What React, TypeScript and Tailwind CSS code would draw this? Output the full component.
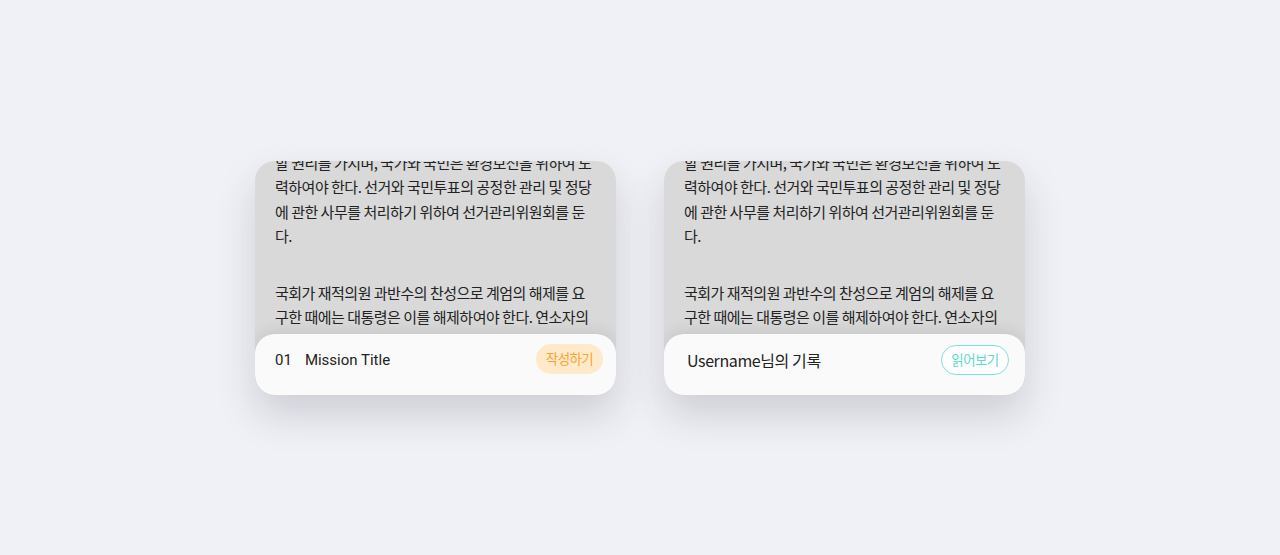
const paragraphs = [
	[
		"할 권리를 가지며, 국가와 국민은 환경보전을 위하여 노",
		"력하여야 한다. 선거와 국민투표의 공정한 관리 및 정당",
		"에 관한 사무를 처리하기 위하여 선거관리위원회를 둔",
		"다."
	],
	[
		"국회가 재적의원 과반수의 찬성으로 계엄의 해제를 요",
		"구한 때에는 대통령은 이를 해제하여야 한다. 연소자의",
		"근로는 특별한 보호를 받는다."
	]
];

const korean = { fontFamily: "'Noto Sans CJK KR', 'Noto Sans', sans-serif" };
const latin = { fontFamily: "Roboto, 'Noto Sans CJK KR', sans-serif" };

const BodyText = () => (
	<div className="flex-1 overflow-hidden px-5">
		<div
			className="-mt-[10px] text-[15px] leading-[24.5px] tracking-[-0.5px] text-[#222222]"
			style={korean}
		>
			{paragraphs.map((lines, i) => (
				<p key={i} className={i > 0 ? "mt-8" : ""}>
					{lines.map((line) => (
						<span key={line} className="block whitespace-nowrap">
							{line}
						</span>
					))}
				</p>
			))}
		</div>
	</div>
);

const Card = ({ children }: { children: React.ReactNode }) => (
	<div className="flex h-[234px] w-[361px] flex-col overflow-hidden rounded-[20px] bg-[#d9d9d9] shadow-[0_20px_38px_rgba(40,44,60,0.17)]">
		<BodyText />
		{children}
	</div>
);

const App = () => {
	return (
		<div className="flex min-h-[555px] w-full items-center justify-center gap-12 bg-[#f0f1f6]">
			<Card>
				<div className="flex h-[61px] items-start justify-between rounded-[20px] bg-[#fafafa] pl-5 pr-[13px] pt-[10px] shadow-[0_-4px_14px_rgba(0,0,0,0.08)]">
					<div className="flex h-[31px] items-center pt-[3px] text-[15px] text-[#222222]" style={latin}>
						<span>01</span>
						<span className="ml-[13px]">Mission Title</span>
					</div>
					<button
						className="flex h-[30px] w-[67px] items-center justify-center rounded-full bg-[#fee9cb] text-[13.5px] tracking-[-0.6px] text-[#f7a531]"
						style={korean}
					>
						작성하기
					</button>
				</div>
			</Card>
			<Card>
				<div className="flex h-[61px] items-start justify-between rounded-[20px] bg-[#fafafa] pl-[23px] pr-4 pt-[11px] shadow-[0_-4px_14px_rgba(0,0,0,0.08)]">
					<div
						className="flex h-[30px] items-center text-[16px] tracking-[-0.4px] text-[#222222]"
						style={korean}
					>
						Username님의 기록
					</div>
					<button
						className="flex h-[30px] w-[68px] items-center justify-center rounded-full border border-[#7fe2d9] bg-white text-[13.5px] tracking-[-0.6px] text-[#62d9cd]"
						style={korean}
					>
						읽어보기
					</button>
				</div>
			</Card>
		</div>
	);
};

export default App;
